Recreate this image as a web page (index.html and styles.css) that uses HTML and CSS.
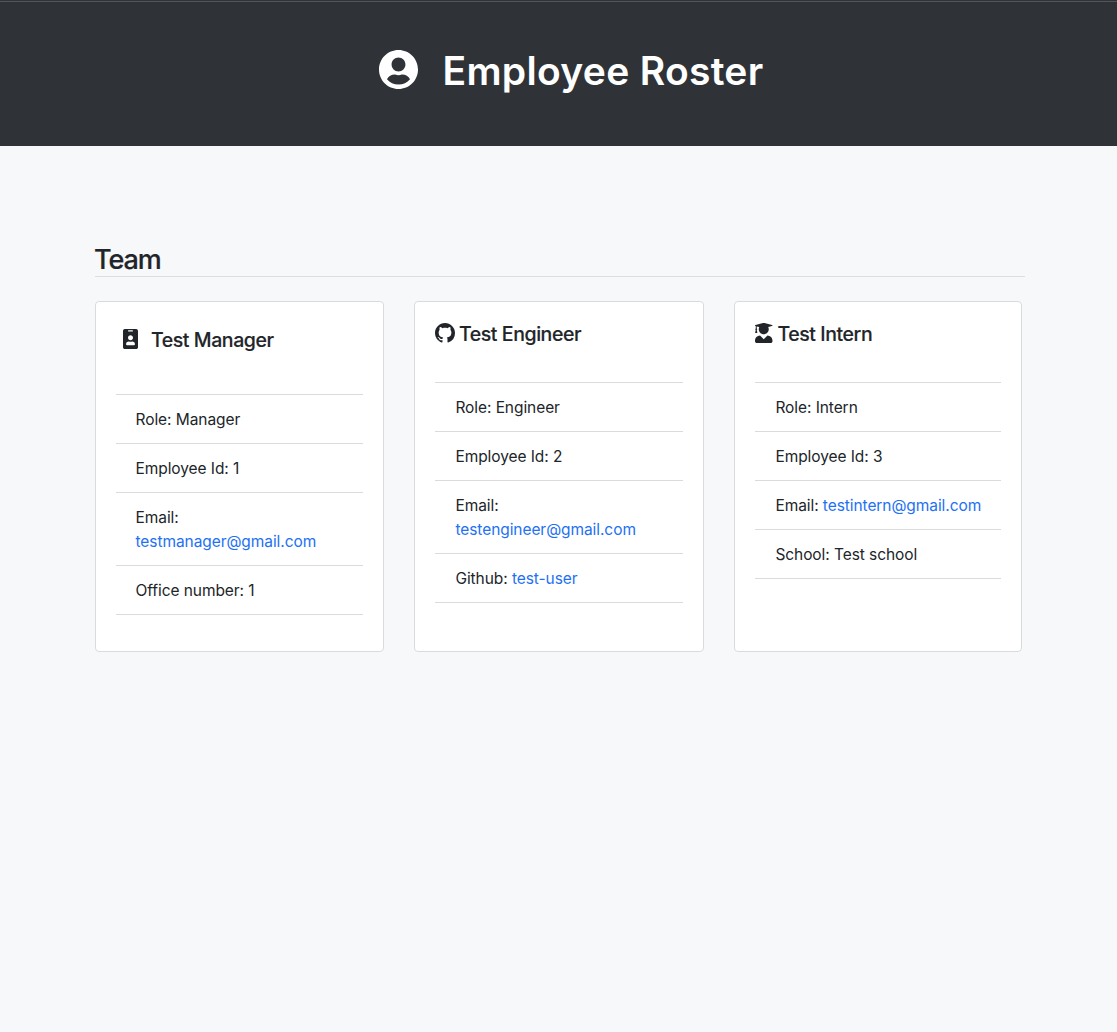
FILE: index.html
```html
<!DOCTYPE html>
<html lang="en">
<head>
<meta charset="utf-8">
<title>Employee Roster</title>
<link rel="stylesheet" href="styles.css">
</head>
<body>
<header class="banner">
  <svg class="banner-icon" viewBox="0 8 496 496"><path d="M248 8C111 8 0 119 0 256s111 248 248 248 248-111 248-248S385 8 248 8zm0 96c48.6 0 88 39.4 88 88s-39.4 88-88 88-88-39.4-88-88 39.4-88 88-88zm0 344c-58.7 0-111.3-26.6-146.5-68.2 18.8-35.4 55.6-59.8 98.5-59.8 2.4 0 4.8.4 7.1 1.1 13 4.2 26.6 6.9 40.9 6.9 14.3 0 28-2.7 40.9-6.9 2.3-.7 4.7-1.1 7.1-1.1 42.9 0 79.7 24.4 98.5 59.8C359.3 421.4 306.7 448 248 448z"/></svg>
  <h1>Employee Roster</h1>
</header>
<main class="container">
  <h2 class="section-title">Team</h2>
  <div class="cards">
    <section class="card">
      <h3 class="card-title manager-title">
        <svg class="badge-icon" viewBox="0 0 384 512"><path d="M336 0H48C21.5 0 0 21.5 0 48v416c0 26.5 21.5 48 48 48h288c26.5 0 48-21.5 48-48V48c0-26.5-21.5-48-48-48zM144 32h96c8.8 0 16 7.2 16 16s-7.2 16-16 16h-96c-8.8 0-16-7.2-16-16s7.2-16 16-16zm48 128c35.3 0 64 28.7 64 64s-28.7 64-64 64-64-28.7-64-64 28.7-64 64-64zm112 236.8c0 10.6-10 19.2-22.4 19.2H102.4C90 416 80 407.4 80 396.8v-19.2c0-31.8 30.1-57.6 67.2-57.6h5c12.3 5.1 25.7 8 39.8 8s27.6-2.9 39.8-8h5c37.1 0 67.2 25.8 67.2 57.6v19.2z"/></svg>
        <span>Test Manager</span>
      </h3>
      <ul class="details">
        <li>Role: Manager</li>
        <li>Employee Id: 1</li>
        <li>Email: <a href="mailto:testmanager@gmail.com">testmanager@gmail.com</a></li>
        <li>Office number: 1</li>
      </ul>
    </section>
    <section class="card">
      <h3 class="card-title engineer-title">
        <svg class="github-icon" viewBox="0 0 16 16"><path d="M8 0C3.58 0 0 3.58 0 8c0 3.54 2.29 6.53 5.47 7.59.4.07.55-.17.55-.38 0-.19-.01-.82-.01-1.49-2.01.37-2.53-.49-2.69-.94-.09-.23-.48-.94-.82-1.13-.28-.15-.68-.52-.01-.53.63-.01 1.08.58 1.23.82.72 1.21 1.87.87 2.33.66.07-.52.28-.87.51-1.07-1.78-.2-3.64-.89-3.64-3.95 0-.87.31-1.59.82-2.15-.08-.2-.36-1.02.08-2.12 0 0 .67-.21 2.2.82.64-.18 1.32-.27 2-.27.68 0 1.36.09 2 .27 1.53-1.04 2.2-.82 2.2-.82.44 1.1.16 1.92.08 2.12.51.56.82 1.27.82 2.15 0 3.07-1.87 3.75-3.65 3.95.29.25.54.73.54 1.48 0 1.07-.01 1.93-.01 2.2 0 .21.15.46.55.38A8.013 8.013 0 0016 8c0-4.42-3.58-8-8-8z"/></svg>
        <span>Test Engineer</span>
      </h3>
      <ul class="details">
        <li>Role: Engineer</li>
        <li>Employee Id: 2</li>
        <li>Email: <a href="mailto:testengineer@gmail.com">testengineer@gmail.com</a></li>
        <li>Github: <a href="#">test-user</a></li>
      </ul>
    </section>
    <section class="card">
      <h3 class="card-title intern-title">
        <svg class="graduate-icon" viewBox="0 0 448 512"><path d="M319.4 320.6L224 416l-95.4-95.4C57.1 323.7 0 382.2 0 454.4v9.6c0 26.5 21.5 48 48 48h352c26.5 0 48-21.5 48-48v-9.6c0-72.2-57.1-130.7-128.6-133.8zM13.6 79.8l6.4 1.5v58.4c-7 4.2-12 11.5-12 20.3 0 8.4 4.6 15.4 11.1 19.7L3.5 242c-1.7 6.9 2.1 14 7.6 14h41.8c5.5 0 9.3-7.1 7.6-14l-15.6-62.3C51.4 175.4 56 168.4 56 160c0-8.8-5-16.1-12-20.3V87.1l66 15.9c-8.6 17.2-14 36.4-14 57 0 70.7 57.3 128 128 128s128-57.3 128-128c0-20.6-5.3-39.8-14-57l96.3-23.2c18.2-4.4 18.2-27.1 0-31.5l-190.4-46c-13-3.1-26.7-3.1-39.7 0L13.6 48.2c-18.1 4.4-18.1 27.2 0 31.6z"/></svg>
        <span>Test Intern</span>
      </h3>
      <ul class="details">
        <li>Role: Intern</li>
        <li>Employee Id: 3</li>
        <li>Email: <a href="mailto:testintern@gmail.com">testintern@gmail.com</a></li>
        <li>School: Test school</li>
      </ul>
    </section>
  </div>
</main>
</body>
</html>
```

FILE: styles.css
```css
* { box-sizing: border-box; }

body {
  margin: 0;
  min-height: 1032px;
  background: #f7f8fa;
  color: #212529;
  font-family: Inter, "Liberation Sans", sans-serif;
  font-size: 15.5px;
  line-height: 24px;
  letter-spacing: -0.07px;
}

h1, h2, h3, ul { margin: 0; padding: 0; }
svg { display: block; fill: currentColor; flex: none; }

.banner {
  display: flex;
  height: 146px;
  padding: 46px 0 0 379.3px;
  gap: 24.2px;
  background: #2f3338;
  border-top: 1px solid #2f3338;
  box-shadow: inset 0 1px #53565a;
  color: #fff;
}
.banner-icon { width: 39px; height: 39px; margin-top: 3.3px; }
.banner h1 {
  font-size: 39px;
  line-height: 48px;
  font-weight: 600;
  letter-spacing: 0.3px;
  white-space: nowrap;
}

.container { padding: 97px 92px 0 95px; }

.section-title {
  height: 34px;
  border-bottom: 1px solid #dcdee3;
  font-size: 27px;
  line-height: 33px;
  font-weight: 500;
  letter-spacing: -1.1px;
  text-indent: -1px;
  -webkit-text-stroke: 0.2px currentColor;
}

.cards {
  display: grid;
  grid-template-columns: 289px 290px 288px;
  column-gap: 30px;
  height: 351px;
  margin-top: 24px;
}

.card {
  padding: 20px 20px 0;
  border: 1px solid #d9dbdd;
  border-radius: 4px;
  background: #fff;
}

.card-title {
  display: flex;
  align-items: center;
  height: 24px;
  margin-bottom: 36px;
  font-size: 19.5px;
  font-weight: 500;
  letter-spacing: -0.43px;
  white-space: nowrap;
  -webkit-text-stroke: 0.15px currentColor;
}
.manager-title { height: 36px; padding-left: 7px; gap: 13px; }
.engineer-title { gap: 4px; }
.intern-title { gap: 5px; }
.badge-icon { width: 15px; height: 20px; margin-top: -2px; }
.github-icon { width: 20px; height: 20px; margin-top: -2px; }
.graduate-icon { width: 17.5px; height: 20px; margin-top: -2px; }

.details {
  list-style: none;
  border-top: 1px solid #dadbdc;
}
.details li {
  padding: 13px 16px 11px 20.4px;
  border-bottom: 1px solid #dadbdc;
}
.card:first-child .details li { padding-left: 19.5px; }
.card:last-child .details li { padding-right: 12px; }
.details a { color: #2371f3; text-decoration: none; }
```
